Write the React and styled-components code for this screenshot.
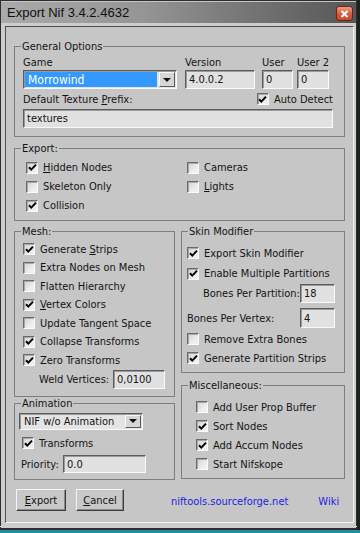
import React from 'react'
import styled, { createGlobalStyle } from 'styled-components'

const GlobalStyle = createGlobalStyle`
    html, body {
        margin: 0;
        padding: 0;
    }
    body {
        width: 360px;
        height: 533px;
        overflow: hidden;
        background: linear-gradient(to bottom, #1c2420 0, #1c2420 530px, #2a89a4 530px);
        font-family: "DejaVu Sans Condensed", "DejaVu Sans", "Liberation Sans", sans-serif;
        font-stretch: condensed;
        font-size: 11px;
        color: #141414;
    }
`

const Window = styled.div`
    width: 357px;
    height: 530px;
    box-sizing: border-box;
    padding: 1px 1px 2px 1px;
    background: #2e2e2e;
    display: flex;
    flex-direction: column;
    box-shadow: inset 0 -3px 0 #2e2e2e, inset 0 -4px 0 #f2f2f2;
`

const TitleBar = styled.div`
    height: 22px;
    flex: none;
    display: flex;
    align-items: center;
    justify-content: space-between;
    padding: 0 3px 0 6px;
    background: linear-gradient(to right, #aaaaaa 0%, #959595 40%, #6a6a6a 80%, #575757 100%);
    box-shadow: inset 0 1px 0 #c4c4c4;
`

const Title = styled.span`
    font-family: "Liberation Sans", sans-serif;
    font-stretch: normal;
    font-size: 13px;
    color: #101010;
`

const CloseButton = styled.div`
    width: 17px;
    height: 15px;
    margin-top: 3px;
    box-sizing: border-box;
    border: 1px solid #6e2514;
    border-radius: 3px;
    background: linear-gradient(to bottom, #f09a80, #d65a3c 55%, #c84a2e);
    display: flex;
    align-items: center;
    justify-content: center;
`

const Frame = styled.div`
    flex: 1;
    display: flex;
    background: #cdcdcd;
    padding: 3px 3px 5px 4px;
`

const Client = styled.div`
    flex: 1;
    display: flex;
    flex-direction: column;
    background: #c6c6c6;
    border: 1px solid;
    border-color: #4e4e4e #f2f2f2 #f2f2f2 #4e4e4e;
    padding: 13px 8px 0 8px;
`

const Group = styled.fieldset`
    margin: ${p => p.$mt || 0}px 0 0 0;
    padding: 0;
    min-width: 0;
    border: 1px solid #7e7e7e;
    box-sizing: border-box;
    width: ${p => (p.$w ? `${p.$w}px` : 'auto')};
`

const Legend = styled.legend`
    margin-left: 6px;
    padding: 0 1px;
    line-height: 13px;
    height: 13px;
`

const GroupBody = styled.div`
    display: flex;
    flex-direction: column;
    padding: ${p => p.$pad};
`

const Columns = styled.div`
    display: flex;
    gap: 6px;
    margin-top: 4px;
    align-items: flex-start;
`

const Column = styled.div`
    display: flex;
    flex-direction: column;
    width: ${p => (p.$w ? `${p.$w}px` : 'auto')};
    flex: ${p => (p.$w ? 'none' : 1)};
`

const FieldRow = styled.div`
    display: flex;
`

const Field = styled.div`
    display: flex;
    flex-direction: column;
    width: ${p => p.$w}px;
    flex: none;
`

const Caption = styled.span`
    line-height: 13px;
    white-space: nowrap;
    margin-bottom: ${p => p.$mb || 0}px;
    width: ${p => (p.$w ? `${p.$w}px` : 'auto')};
    padding-left: ${p => p.$indent || 0}px;
    box-sizing: border-box;
    flex: none;
`

const Input = styled.input`
    box-sizing: border-box;
    width: ${p => p.$w}px;
    height: ${p => p.$h || 19}px;
    margin: 0;
    padding: 0 0 0 3px;
    font: inherit;
    font-size: 11px;
    color: #141414;
    background: #e1e1e1;
    border: 1px solid;
    border-color: #5c5c5c #fafafa #fafafa #5c5c5c;
    box-shadow: inset 1px 1px 0 #9a9a9a;
    outline: none;
`

const Select = styled.div`
    box-sizing: border-box;
    width: ${p => p.$w}px;
    height: ${p => p.$h}px;
    display: flex;
    align-items: stretch;
    padding: 1px;
    background: #e4e4e4;
    border: 1px solid;
    border-color: #5c5c5c #fafafa #fafafa #5c5c5c;
    box-shadow: inset 1px 1px 0 #9a9a9a;
`

const SelectValue = styled.div`
    flex: 1;
    display: flex;
    align-items: center;
    padding-left: 3px;
    margin-right: 2px;
    background: ${p => (p.$active ? '#3399ff' : 'transparent')};
    color: ${p => (p.$active ? '#ffffff' : '#141414')};
    font-size: ${p => (p.$active ? '12px' : '11px')};
`

const ArrowButton = styled.div`
    width: 14px;
    flex: none;
    display: flex;
    align-items: center;
    justify-content: center;
    background: #d6d6d6;
    border: 1px solid;
    border-color: #fafafa #5a5a5a #5a5a5a #fafafa;
    &::after {
        content: '';
        border-left: 4px solid transparent;
        border-right: 4px solid transparent;
        border-top: 4px solid #111;
    }
`

const Between = styled.div`
    display: flex;
    align-items: center;
    justify-content: space-between;
    height: 14px;
    margin: 3px 0;
`

const CheckGrid = styled.div`
    display: grid;
    grid-template-columns: 161px 1fr;
    grid-auto-rows: 19px;
`

const CheckRow = styled.label`
    display: flex;
    align-items: center;
    height: ${p => p.$h || 19}px;
    margin-top: ${p => p.$mt || 0}px;
    padding-left: ${p => p.$indent || 0}px;
    white-space: nowrap;
`

const Box = styled.span`
    width: 12px;
    height: 12px;
    box-sizing: border-box;
    flex: none;
    margin-right: 5px;
    display: flex;
    align-items: center;
    justify-content: center;
    border: 1px solid;
    border-color: #6a6a6a #fbfbfb #fbfbfb #6a6a6a;
    box-shadow: inset 1px 1px 0 #a8a8a8;
    background: linear-gradient(135deg, #d2d2d2, #efefef 70%);
`

const InputRow = styled.div`
    display: flex;
    align-items: center;
    margin-top: ${p => p.$mt || 0}px;
    padding-left: ${p => p.$indent || 0}px;
`

const Footer = styled.div`
    display: flex;
    align-items: center;
    margin-top: 9px;
    padding-left: 2px;
`

const Button = styled.button`
    box-sizing: border-box;
    width: ${p => p.$w}px;
    height: 22px;
    margin: 0 ${p => p.$mr || 0}px 0 0;
    padding: 0;
    font: inherit;
    font-size: 11px;
    color: #141414;
    background: #c8c8c8;
    border: 1px solid;
    border-color: #f4f4f4 #3c3c3c #3c3c3c #f4f4f4;
    box-shadow: inset -1px -1px 0 #8a8a8a;
`

const Link = styled.a`
    color: #1d1de6;
    text-decoration: none;
    padding-top: 2px;
    margin-left: ${p => p.$ml}px;
    font-size: 11px;
`

const Check = ({ on }) => (
    <Box>
        {on && (
            <svg width="9" height="9" viewBox="0 0 9 9">
                <path d="M1 4.2 L3.3 6.6 L8 1.6" fill="none" stroke="#000" strokeWidth="2" />
            </svg>
        )}
    </Box>
)

const Option = ({ on, children, ...rest }) => (
    <CheckRow {...rest}>
        <Check on={on} />
        <span>{children}</span>
    </CheckRow>
)

const App = () => {
    return (
        <>
            <GlobalStyle />
            <Window>
                <TitleBar>
                    <Title>Export Nif 3.4.2.4632</Title>
                    <CloseButton>
                        <svg width="9" height="8" viewBox="0 0 9 8">
                            <path d="M1.5 1 L7.5 7 M7.5 1 L1.5 7" stroke="#fff" strokeWidth="2" />
                        </svg>
                    </CloseButton>
                </TitleBar>
                <Frame>
                    <Client>
                        <Group>
                            <Legend>General Options</Legend>
                            <GroupBody $pad="3px 11px 8px 8px">
                                <FieldRow>
                                    <Field $w={162}>
                                        <Caption $mb={1}>Game</Caption>
                                        <Select $w={154} $h={19}>
                                            <SelectValue $active>Morrowind</SelectValue>
                                            <ArrowButton />
                                        </Select>
                                    </Field>
                                    <Field $w={77}>
                                        <Caption $mb={1}>Version</Caption>
                                        <Input $w={70} readOnly value="4.0.0.2" />
                                    </Field>
                                    <Field $w={35}>
                                        <Caption $mb={1}>User</Caption>
                                        <Input $w={31} readOnly value="0" />
                                    </Field>
                                    <Field $w={32}>
                                        <Caption $mb={1}>User 2</Caption>
                                        <Input $w={32} readOnly value="0" />
                                    </Field>
                                </FieldRow>
                                <Between>
                                    <Caption>Default Texture <u>P</u>refix:</Caption>
                                    <Option on>Auto Detect</Option>
                                </Between>
                                <Input $w={310} readOnly value="textures" />
                            </GroupBody>
                        </Group>

                        <Group $mt={5}>
                            <Legend>Export:</Legend>
                            <GroupBody $pad="3px 8px 5px 11px">
                                <CheckGrid>
                                    <Option on><u>H</u>idden Nodes</Option>
                                    <Option>Cameras</Option>
                                    <Option>Skeleton Only</Option>
                                    <Option><u>L</u>ights</Option>
                                    <Option on>Collision</Option>
                                </CheckGrid>
                            </GroupBody>
                        </Group>

                        <Columns>
                            <Column $w={161}>
                                <Group>
                                    <Legend>Mesh:</Legend>
                                    <GroupBody $pad="2px 8px 7px 8px">
                                        <Option on $h={18.5}>Generate <u>S</u>trips</Option>
                                        <Option $h={18.5}>Extra Nodes on Mesh</Option>
                                        <Option $h={18.5}>Flatten Hierarchy</Option>
                                        <Option on $h={18.5}><u>V</u>ertex Colors</Option>
                                        <Option $h={18.5}>Update Tangent Space</Option>
                                        <Option on $h={18.5}>Collapse Transforms</Option>
                                        <Option on $h={18.5}>Zero Transforms</Option>
                                        <InputRow $indent={16}>
                                            <Caption $w={74}>Weld Vertices:</Caption>
                                            <Input $w={52} readOnly value="0,0100" />
                                        </InputRow>
                                    </GroupBody>
                                </Group>
                                <Group>
                                    <Legend>Animation</Legend>
                                    <GroupBody $pad="3px 8px 6px 4px">
                                        <Select $w={124} $h={17}>
                                            <SelectValue>NIF w/o Animation</SelectValue>
                                            <ArrowButton />
                                        </Select>
                                        <Option on $mt={4} $indent={3}>Transforms</Option>
                                        <InputRow $mt={2.5} $indent={2}>
                                            <Caption $w={42}>Priority:</Caption>
                                            <Input $w={83} $h={18} readOnly value="0.0" />
                                        </InputRow>
                                    </GroupBody>
                                </Group>
                            </Column>

                            <Column>
                                <Group>
                                    <Legend>Skin Modifier</Legend>
                                    <GroupBody $pad="5px 8px 4.5px 5px">
                                        <Option on $h={20.5}>Export Skin Modifier</Option>
                                        <Option on $h={20.5}>Enable Multiple Partitions</Option>
                                        <InputRow $indent={16}>
                                            <Caption $w={97}>Bones Per Partition:</Caption>
                                            <Input $w={35} readOnly value="18" />
                                        </InputRow>
                                        <InputRow $mt={5}>
                                            <Caption $w={113}>Bones Per Vertex:</Caption>
                                            <Input $w={35} $h={20} readOnly value="4" />
                                        </InputRow>
                                        <Option $mt={1.5}>Remove Extra Bones</Option>
                                        <Option on>Generate Partition Strips</Option>
                                    </GroupBody>
                                </Group>
                                <Group $mt={5.5}>
                                    <Legend>Miscellaneous:</Legend>
                                    <GroupBody $pad="6px 8px 4.5px 14px">
                                        <Option>Add User Prop Buffer</Option>
                                        <Option on>Sort Nodes</Option>
                                        <Option on>Add Accum Nodes</Option>
                                        <Option>Start Nifskope</Option>
                                    </GroupBody>
                                </Group>
                            </Column>
                        </Columns>

                        <Footer>
                            <Button $w={50} $mr={10}><u>E</u>xport</Button>
                            <Button $w={48}><u>C</u>ancel</Button>
                            <Link $ml={47}>niftools.sourceforge.net</Link>
                            <Link $ml={30}>Wiki</Link>
                        </Footer>
                    </Client>
                </Frame>
            </Window>
        </>
    )
}

export default App
